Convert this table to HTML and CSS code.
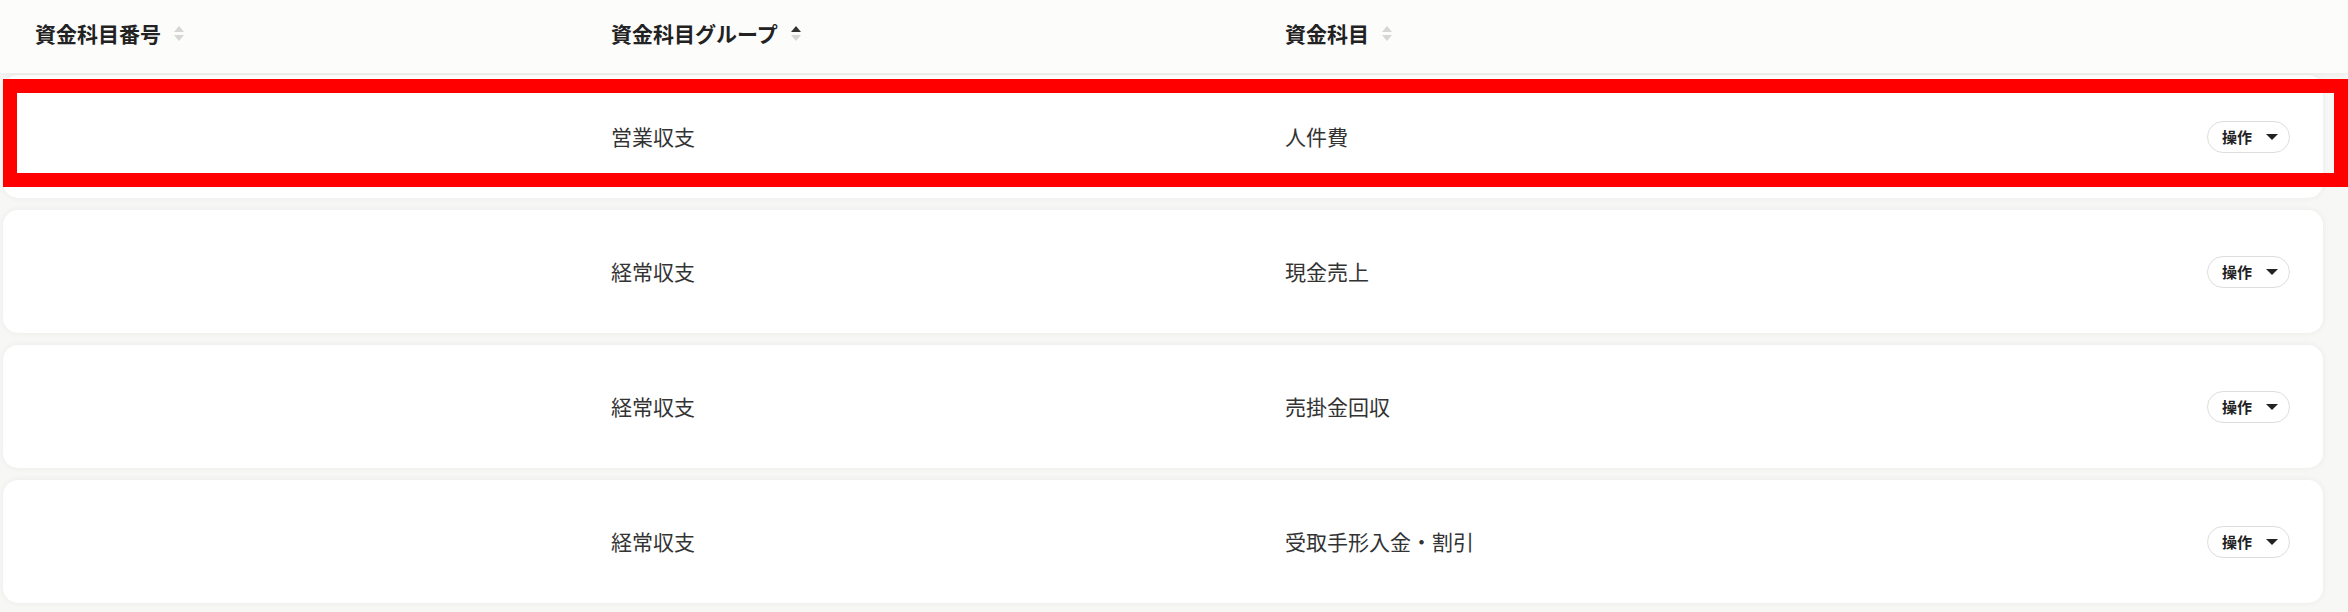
FILE: index.html
```html
<!DOCTYPE html>
<html lang="ja">
<head>
<meta charset="utf-8">
<title>資金科目</title>
<link rel="stylesheet" href="styles.css">
</head>
<body>
<div class="page">
  <div class="table">
    <div class="head row-grid">
      <div class="th">資金科目番号 <span class="sort"><i class="up"></i><i class="down"></i></span></div>
      <div class="th">資金科目グループ <span class="sort active-up"><i class="up"></i><i class="down"></i></span></div>
      <div class="th">資金科目 <span class="sort"><i class="up"></i><i class="down"></i></span></div>
      <div></div>
    </div>
    <div class="rows">
      <div class="card row-grid">
        <div class="td"></div>
        <div class="td">営業収支</div>
        <div class="td">人件費</div>
        <div class="act"><button class="btn">操作 <span class="caret"></span></button></div>
      </div>
      <div class="card row-grid">
        <div class="td"></div>
        <div class="td">経常収支</div>
        <div class="td">現金売上</div>
        <div class="act"><button class="btn">操作 <span class="caret"></span></button></div>
      </div>
      <div class="card row-grid">
        <div class="td"></div>
        <div class="td">経常収支</div>
        <div class="td">売掛金回収</div>
        <div class="act"><button class="btn">操作 <span class="caret"></span></button></div>
      </div>
      <div class="card row-grid">
        <div class="td"></div>
        <div class="td">経常収支</div>
        <div class="td">受取手形入金・割引</div>
        <div class="act"><button class="btn">操作 <span class="caret"></span></button></div>
      </div>
    </div>
  </div>
  <div class="highlight"></div>
</div>
</body>
</html>
```

FILE: styles.css
```css
* { box-sizing: border-box; }
html, body {
  margin: 0;
  padding: 0;
  background: #f7f7f6;
  font-family: "Noto Sans CJK JP", "Noto Sans", sans-serif;
  color: #333;
}
.page {
  position: relative;
  width: 2348px;
  height: 612px;
  overflow: hidden;
}
.table {
  width: 2323px;
  padding-left: 3px;
}
.row-grid {
  display: grid;
  grid-template-columns: 576px 674px 1fr auto;
  align-items: center;
  padding: 0 33px 0 32px;
}
.head {
  height: 73px;
  margin-left: -3px;
  padding-left: 35px;
  width: 2348px;
  padding-right: 58px;
  background: #fcfcfb;
  box-shadow: 0 2px 6px rgba(0,0,0,0.05);
  position: relative;
  z-index: 1;
  padding-bottom: 6px;
}
.th {
  font-size: 21px;
  font-weight: 700;
  color: #222;
  display: flex;
  align-items: center;
  gap: 13px;
  line-height: 1;
}
.sort {
  display: flex;
  flex-direction: column;
  gap: 3px;
}
.sort i {
  display: block;
  width: 0;
  height: 0;
  border-left: 5px solid transparent;
  border-right: 5px solid transparent;
}
.sort .up { border-bottom: 6px solid #d6d6d6; }
.sort .down { border-top: 6px solid #d6d6d6; }
.sort.active-up .up { border-bottom-color: #333; }
.rows {
  display: flex;
  flex-direction: column;
  gap: 12px;
  margin-top: 2px;
}
.card {
  height: 123px;
  background: #fff;
  border-radius: 15px;
  box-shadow: 0 0 6px rgba(0,0,0,0.06);
}
.td {
  font-size: 21px;
  line-height: 1;
  color: #333;
}
.act { display: flex; justify-content: flex-end; }
.btn {
  font-family: "Noto Sans CJK JP", "Noto Sans", sans-serif;
  font-size: 15px;
  font-weight: 700;
  color: #222;
  background: #fff;
  border: 1.5px solid #dedede;
  border-radius: 17px;
  height: 32px;
  width: 83px;
  padding: 0 0 0 14px;
  display: flex;
  align-items: center;
  gap: 14px;
  line-height: 1;
}
.caret {
  width: 0;
  height: 0;
  border-left: 6px solid transparent;
  border-right: 6px solid transparent;
  border-top: 6px solid #222;
}
.highlight {
  position: absolute;
  left: 3px;
  top: 79px;
  right: 0;
  height: 108px;
  border: 14px solid #ff0000;
  z-index: 5;
}
```
